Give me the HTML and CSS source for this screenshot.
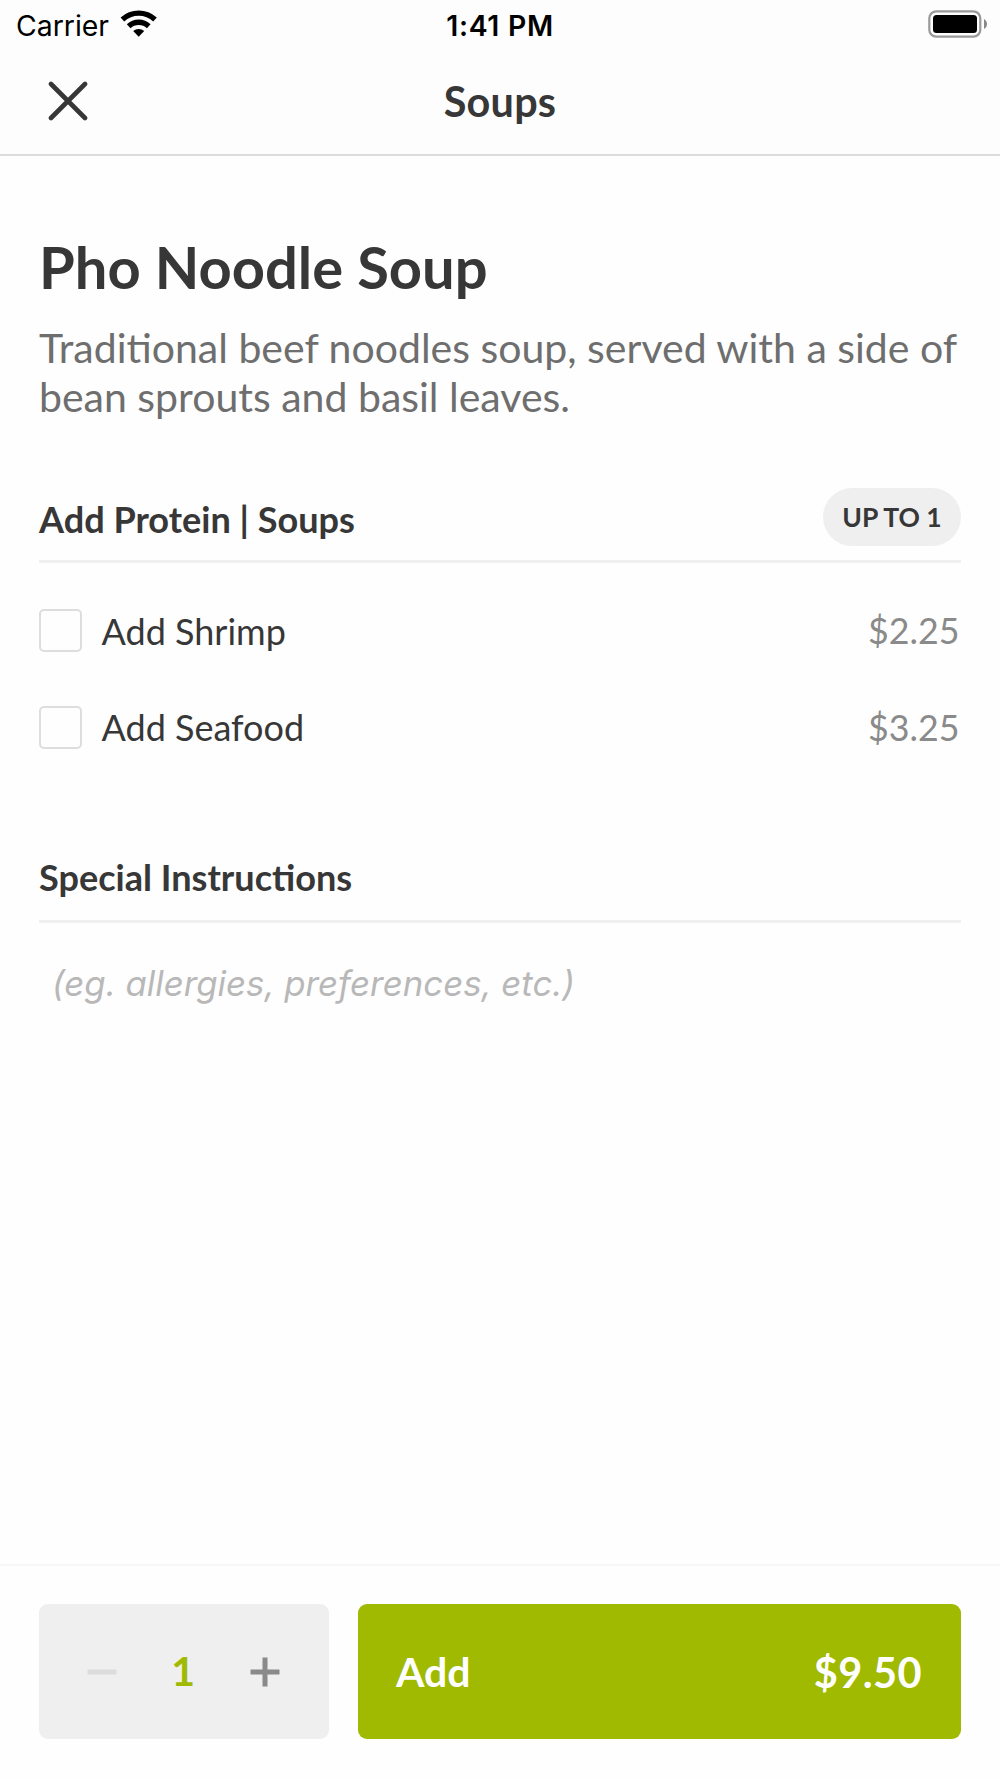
FILE: index.html
```html
<!DOCTYPE html>
<html lang="en">
<head>
<meta charset="utf-8">
<title>Pho Noodle Soup</title>
<link rel="stylesheet" href="styles.css">
</head>
<body>
<header class="header">
  <div class="status">
    <div class="status-left">
      <span class="carrier">Carrier</span>
      <svg class="wifi" width="38" height="30" viewBox="0 0 38 30">
        <path d="M0.600 8.600A26.500 26.500 0 0 1 36.800 8.600L33.200 12.400A21.300 21.300 0 0 0 4.200 12.400Z"/>
        <path d="M6.800 15.200A17.500 17.500 0 0 1 30.600 15.200L26.900 19.200A12 12 0 0 0 10.500 19.200Z"/>
        <path d="M13.200 22.100A8 8 0 0 1 24.200 22.100L18.700 27.800Z"/>
      </svg>
    </div>
    <span class="time">1:41 PM</span>
    <svg class="battery" width="60" height="28" viewBox="0 0 60 28">
      <rect class="battery-case" x="1.300" y="1.300" width="51" height="25.400" rx="7"/>
      <rect x="5" y="5" width="44" height="18" rx="3.500"/>
      <path class="battery-tip" d="M56 9C60 11 60 17 56 19Z"/>
    </svg>
  </div>
  <div class="nav">
    <button class="close" aria-label="Close">
      <svg width="40" height="40" viewBox="0 0 40 40"><path d="M3 3L37 37M37 3L3 37"/></svg>
    </button>
    <h1 class="nav-title">Soups</h1>
  </div>
</header>
<main class="content">
  <h2 class="dish">Pho Noodle Soup</h2>
  <p class="description">Traditional beef noodles soup, served with a side of bean sprouts and basil leaves.</p>
  <section class="group">
    <div class="group-head">
      <h3>Add Protein | Soups</h3>
      <span class="limit">UP TO 1</span>
    </div>
    <label class="option"><span class="box"></span><span class="name">Add Shrimp</span><span class="price">$2.25</span></label>
    <label class="option"><span class="box"></span><span class="name">Add Seafood</span><span class="price">$3.25</span></label>
  </section>
  <section class="notes">
    <h3>Special Instructions</h3>
    <p class="placeholder">(eg. allergies, preferences, etc.)</p>
  </section>
</main>
<footer class="footer">
  <div class="stepper">
    <svg class="minus" width="30" height="30" viewBox="0 0 30 30"><path d="M0.500 15H29.500"/></svg>
    <span class="count">1</span>
    <svg class="plus" width="30" height="30" viewBox="0 0 30 30"><path d="M0.500 15H29.500M15 0.500V29.500"/></svg>
  </div>
  <button class="add"><span>Add</span><span class="total">$9.50</span></button>
</footer>
</body>
</html>
```
FILE: styles.css
```css
* { box-sizing: border-box; }
body {
  margin: 0;
  height: 1778px;
  display: flex;
  flex-direction: column;
  overflow: hidden;
  background: #fefefe;
  color: #373737;
  font-family: Lato, "Liberation Sans", sans-serif;
}
h1, h2, h3, p { margin: 0; }
button { border: 0; background: none; font: inherit; }
.header { height: 156px; border-bottom: 2px solid #dcdcdc; background: #fdfdfd; }
.status {
  height: 50px;
  display: grid;
  grid-template-columns: 1fr auto 1fr;
  align-items: center;
  padding: 0 16px;
  color: #000;
  font: 28.400px/34px Inter, "Liberation Sans", sans-serif;
}
.status-left { display: flex; align-items: center; gap: 11px; }
.carrier, .time { padding-top: 1px; }
.time { font-weight: 600; letter-spacing: 0.700px; }
.wifi, .battery { margin-bottom: 2px; }
.battery { justify-self: end; margin-right: -4px; }
.battery-case { fill: none; stroke: #999; stroke-width: 2.2; }
.battery-tip { fill: #888; }
.nav { height: 102px; display: grid; grid-template-columns: 100px 1fr 100px; align-items: center; }
.close { justify-self: start; padding: 0 0 0 47.500px; height: 40px; }
.close svg { display: block; }
.close path { stroke: #373737; stroke-width: 4.600; stroke-linecap: round; }
.nav-title { text-align: center; font-size: 41.400px; line-height: 50px; letter-spacing: 0.200px; }
.content { flex: 1; min-height: 0; padding: 76px 39px 0; }
.dish { font-size: 57.900px; line-height: 70px; }
.description { margin-top: 21px; color: #6e6e6e; font-size: 41px; line-height: 49px; }
.group { margin-top: 65px; }
.group-head { display: flex; justify-content: space-between; align-items: flex-start; height: 77px; border-bottom: 3px solid #f0f0f0; }
h3 { font-size: 36.100px; line-height: 44px; }
.group-head h3 { margin-top: 11px; }
.limit { width: 138px; height: 58px; margin-top: 2px; border-radius: 29px; background: #efefef; font-size: 26.500px; line-height: 59px; font-weight: 700; text-align: center; }
.option { display: flex; align-items: center; height: 43px; margin-top: 53.500px; font-size: 36px; }
.group-head + .option { margin-top: 46px; }
.box { width: 43px; height: 43px; border: 2px solid #ddd; border-radius: 5px; }
.name { margin-left: 19.500px; }
.price { margin: 0 1.500px 0 auto; color: #8a8a8a; font-size: 35.800px; }
.notes { margin-top: 106px; }
.notes h3 { padding-bottom: 21.500px; border-bottom: 3px solid #f0f0f0; }
.placeholder { padding: 38px 13px 0; color: #b8b8b8; font: italic 34.800px/44px Inter, "Liberation Sans", sans-serif; }
.footer { height: 214px; border-top: 2px solid #f7f7f7; padding: 38px 39px 39px; display: flex; gap: 29px; }
.stepper { width: 289.500px; height: 135px; border-radius: 9px; background: #efefef; display: flex; align-items: center; justify-content: space-between; padding: 0 48.500px 0 47.500px; }
.stepper path { stroke: #8a8a8a; stroke-width: 5; }
.stepper .minus path { stroke: #dcdcdc; }
.count { padding-bottom: 2px; color: #9fba00; font-size: 41px; font-weight: 700; }
.add { flex: 1; height: 135px; padding: 0 39px 0 38.500px; border-radius: 9px; background: #9fba00; color: #fff; display: flex; align-items: center; justify-content: space-between; font-size: 41px; font-weight: 700; }
.total { font-size: 41.500px; letter-spacing: 0.400px; }
```
